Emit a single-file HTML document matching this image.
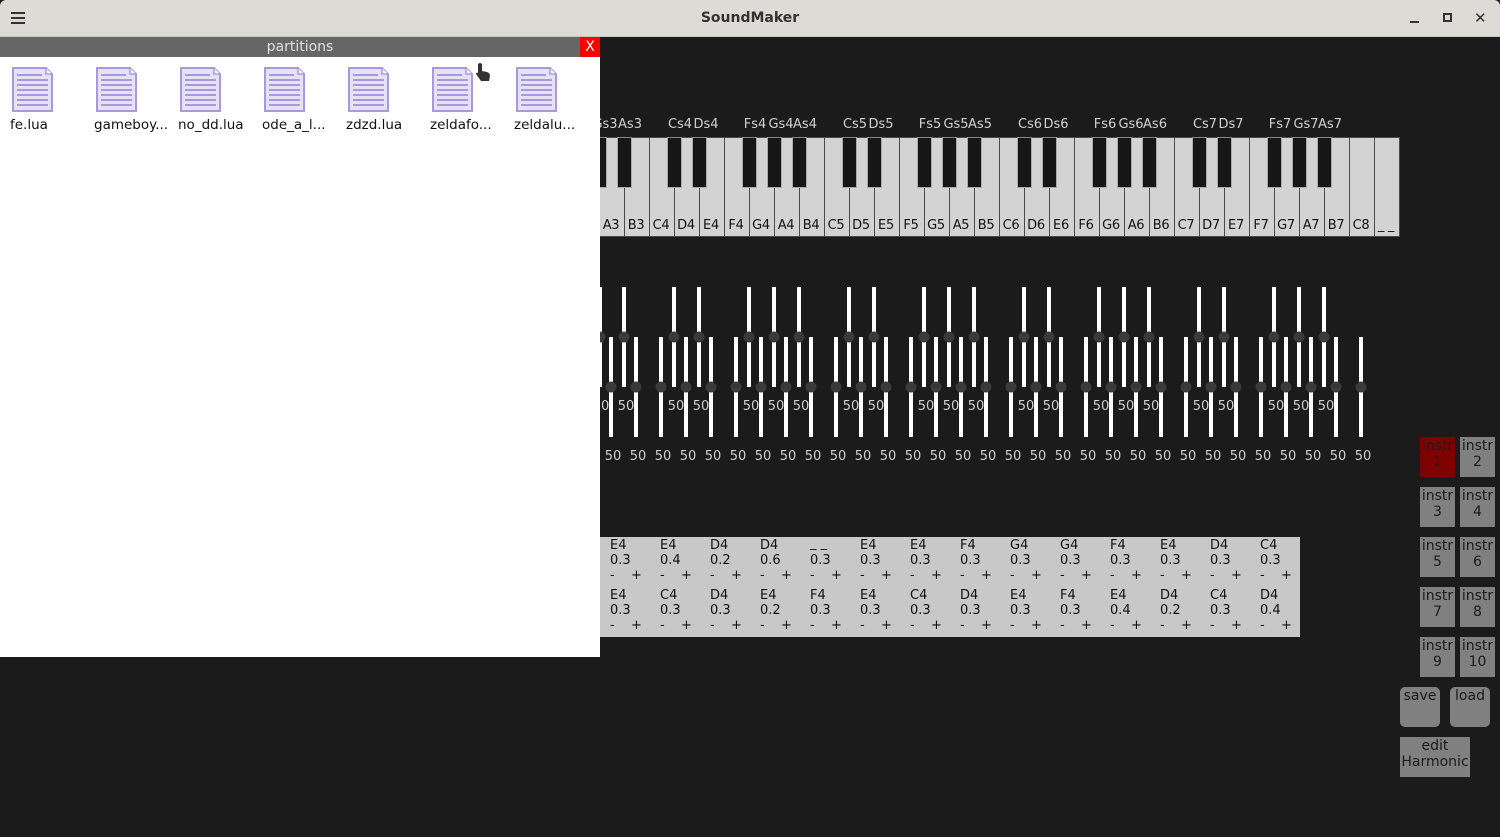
<!DOCTYPE html>
<html><head><meta charset="utf-8"><style>
*{margin:0;padding:0;box-sizing:border-box}
body{width:1500px;height:837px;background:#1b1b1b;position:relative;overflow:hidden;font-family:"DejaVu Sans","Liberation Sans",sans-serif;font-size:13px}
.a{position:absolute}
.tb{left:0;top:0;width:1500px;height:37px;background:#dedbd7;border-bottom:1px solid #c8c4c0;border-radius:6px 6px 0 0}
.w{position:absolute;top:137px;width:26px;height:100px;background:#d3d3d3;border:1px solid #4a4a4a;color:#111;font-size:13px;line-height:14px;padding-top:81px;padding-right:2px;text-align:center;letter-spacing:-0.3px}
.b{position:absolute;top:137px;width:15px;height:51px;background:#161616;border:1px solid #aaa;border-top-color:#888}
.bl{position:absolute;top:117px;color:#d0d0d0;font-size:13px;width:40px;text-align:center;margin-left:-20px}
.seq{left:600px;top:537px;width:700px;height:100px;background:#c8c8c8}
.c{position:absolute;width:50px;height:50px;font-size:13px;line-height:15px;color:#111}
.c i{font-style:normal;position:absolute;left:10px;white-space:pre}
.c .n1{top:1px}.c .n2{top:16px}.c .m{top:31px;left:10px}.c .p{top:31px;left:31px}
.btn{position:absolute;background:#808080;color:#1a1a1a;font-size:14px;line-height:16px;text-align:center;padding-top:1px}
.fl{position:absolute;top:117px;font-size:13.5px;color:#111}
</style></head><body>
<div class="a tb"></div>
<div class="a" style="left:11px;top:12px;width:14px;height:2px;background:#333;box-shadow:0 5px 0 #333,0 10px 0 #333"></div>
<div class="a" style="left:0;width:1500px;top:10px;text-align:center;font-weight:bold;font-size:14px;color:#333;padding-left:0">SoundMaker</div>
<div class="a" style="left:1410px;top:21px;width:9px;height:2px;background:#333"></div>
<div class="a" style="left:1443px;top:13px;width:9px;height:9px;border:2px solid #333"></div>
<div class="a" style="left:1474px;top:9px;font-size:15px;font-weight:bold;color:#333">✕</div>

<div class="bl" style="left:605px">Gs3</div><div class="bl" style="left:630px">As3</div>
<div class="bl" style="left:680px">Cs4</div><div class="bl" style="left:706px">Ds4</div>
<div class="bl" style="left:755px">Fs4</div><div class="bl" style="left:781px">Gs4</div><div class="bl" style="left:805px">As4</div>
<div class="bl" style="left:855px">Cs5</div><div class="bl" style="left:881px">Ds5</div>
<div class="bl" style="left:930px">Fs5</div><div class="bl" style="left:956px">Gs5</div><div class="bl" style="left:980px">As5</div>
<div class="bl" style="left:1030px">Cs6</div><div class="bl" style="left:1056px">Ds6</div>
<div class="bl" style="left:1105px">Fs6</div><div class="bl" style="left:1131px">Gs6</div><div class="bl" style="left:1155px">As6</div>
<div class="bl" style="left:1205px">Cs7</div><div class="bl" style="left:1231px">Ds7</div>
<div class="bl" style="left:1280px">Fs7</div><div class="bl" style="left:1306px">Gs7</div><div class="bl" style="left:1330px">As7</div>

<div class="w" style="left:599px">A3</div><div class="w" style="left:624px">B3</div><div class="w" style="left:649px">C4</div><div class="w" style="left:674px">D4</div><div class="w" style="left:699px">E4</div><div class="w" style="left:724px">F4</div><div class="w" style="left:749px">G4</div><div class="w" style="left:774px">A4</div><div class="w" style="left:799px">B4</div><div class="w" style="left:824px">C5</div><div class="w" style="left:849px">D5</div><div class="w" style="left:874px">E5</div><div class="w" style="left:899px">F5</div><div class="w" style="left:924px">G5</div><div class="w" style="left:949px">A5</div><div class="w" style="left:974px">B5</div><div class="w" style="left:999px">C6</div><div class="w" style="left:1024px">D6</div><div class="w" style="left:1049px">E6</div><div class="w" style="left:1074px">F6</div><div class="w" style="left:1099px">G6</div><div class="w" style="left:1124px">A6</div><div class="w" style="left:1149px">B6</div><div class="w" style="left:1174px">C7</div><div class="w" style="left:1199px">D7</div><div class="w" style="left:1224px">E7</div><div class="w" style="left:1249px">F7</div><div class="w" style="left:1274px">G7</div><div class="w" style="left:1299px">A7</div><div class="w" style="left:1324px">B7</div><div class="w" style="left:1349px">C8</div><div class="w" style="left:1374px">_ _</div>
<div class="b" style="left:592px"></div><div class="b" style="left:617px"></div><div class="b" style="left:667px"></div><div class="b" style="left:692px"></div><div class="b" style="left:742px"></div><div class="b" style="left:767px"></div><div class="b" style="left:792px"></div><div class="b" style="left:842px"></div><div class="b" style="left:867px"></div><div class="b" style="left:917px"></div><div class="b" style="left:942px"></div><div class="b" style="left:967px"></div><div class="b" style="left:1017px"></div><div class="b" style="left:1042px"></div><div class="b" style="left:1092px"></div><div class="b" style="left:1117px"></div><div class="b" style="left:1142px"></div><div class="b" style="left:1192px"></div><div class="b" style="left:1217px"></div><div class="b" style="left:1267px"></div><div class="b" style="left:1292px"></div><div class="b" style="left:1317px"></div>

<svg class="a" style="left:0;top:0" width="1500" height="837">
<g fill="#fff">
<rect x="598" y="287" width="4" height="100"/><rect x="622" y="287" width="4" height="100"/><rect x="672" y="287" width="4" height="100"/><rect x="697" y="287" width="4" height="100"/><rect x="747" y="287" width="4" height="100"/><rect x="772" y="287" width="4" height="100"/><rect x="797" y="287" width="4" height="100"/><rect x="847" y="287" width="4" height="100"/><rect x="872" y="287" width="4" height="100"/><rect x="922" y="287" width="4" height="100"/><rect x="947" y="287" width="4" height="100"/><rect x="972" y="287" width="4" height="100"/><rect x="1022" y="287" width="4" height="100"/><rect x="1047" y="287" width="4" height="100"/><rect x="1097" y="287" width="4" height="100"/><rect x="1122" y="287" width="4" height="100"/><rect x="1147" y="287" width="4" height="100"/><rect x="1197" y="287" width="4" height="100"/><rect x="1222" y="287" width="4" height="100"/><rect x="1272" y="287" width="4" height="100"/><rect x="1297" y="287" width="4" height="100"/><rect x="1322" y="287" width="4" height="100"/>
</g>
<g fill="#3a3a3a">
<circle cx="600" cy="337" r="5.5"/><circle cx="624" cy="337" r="5.5"/><circle cx="674" cy="337" r="5.5"/><circle cx="699" cy="337" r="5.5"/><circle cx="749" cy="337" r="5.5"/><circle cx="774" cy="337" r="5.5"/><circle cx="799" cy="337" r="5.5"/><circle cx="849" cy="337" r="5.5"/><circle cx="874" cy="337" r="5.5"/><circle cx="924" cy="337" r="5.5"/><circle cx="949" cy="337" r="5.5"/><circle cx="974" cy="337" r="5.5"/><circle cx="1024" cy="337" r="5.5"/><circle cx="1049" cy="337" r="5.5"/><circle cx="1099" cy="337" r="5.5"/><circle cx="1124" cy="337" r="5.5"/><circle cx="1149" cy="337" r="5.5"/><circle cx="1199" cy="337" r="5.5"/><circle cx="1224" cy="337" r="5.5"/><circle cx="1274" cy="337" r="5.5"/><circle cx="1299" cy="337" r="5.5"/><circle cx="1324" cy="337" r="5.5"/>
</g>
<g fill="#fff">
<rect x="609" y="337" width="4" height="100"/><rect x="634" y="337" width="4" height="100"/><rect x="659" y="337" width="4" height="100"/><rect x="684" y="337" width="4" height="100"/><rect x="709" y="337" width="4" height="100"/><rect x="734" y="337" width="4" height="100"/><rect x="759" y="337" width="4" height="100"/><rect x="784" y="337" width="4" height="100"/><rect x="809" y="337" width="4" height="100"/><rect x="834" y="337" width="4" height="100"/><rect x="859" y="337" width="4" height="100"/><rect x="884" y="337" width="4" height="100"/><rect x="909" y="337" width="4" height="100"/><rect x="934" y="337" width="4" height="100"/><rect x="959" y="337" width="4" height="100"/><rect x="984" y="337" width="4" height="100"/><rect x="1009" y="337" width="4" height="100"/><rect x="1034" y="337" width="4" height="100"/><rect x="1059" y="337" width="4" height="100"/><rect x="1084" y="337" width="4" height="100"/><rect x="1109" y="337" width="4" height="100"/><rect x="1134" y="337" width="4" height="100"/><rect x="1159" y="337" width="4" height="100"/><rect x="1184" y="337" width="4" height="100"/><rect x="1209" y="337" width="4" height="100"/><rect x="1234" y="337" width="4" height="100"/><rect x="1259" y="337" width="4" height="100"/><rect x="1284" y="337" width="4" height="100"/><rect x="1309" y="337" width="4" height="100"/><rect x="1334" y="337" width="4" height="100"/><rect x="1359" y="337" width="4" height="100"/>
</g>
<g fill="#3a3a3a">
<circle cx="611" cy="387" r="5.5"/><circle cx="636" cy="387" r="5.5"/><circle cx="661" cy="387" r="5.5"/><circle cx="686" cy="387" r="5.5"/><circle cx="711" cy="387" r="5.5"/><circle cx="736" cy="387" r="5.5"/><circle cx="761" cy="387" r="5.5"/><circle cx="786" cy="387" r="5.5"/><circle cx="811" cy="387" r="5.5"/><circle cx="836" cy="387" r="5.5"/><circle cx="861" cy="387" r="5.5"/><circle cx="886" cy="387" r="5.5"/><circle cx="911" cy="387" r="5.5"/><circle cx="936" cy="387" r="5.5"/><circle cx="961" cy="387" r="5.5"/><circle cx="986" cy="387" r="5.5"/><circle cx="1011" cy="387" r="5.5"/><circle cx="1036" cy="387" r="5.5"/><circle cx="1061" cy="387" r="5.5"/><circle cx="1086" cy="387" r="5.5"/><circle cx="1111" cy="387" r="5.5"/><circle cx="1136" cy="387" r="5.5"/><circle cx="1161" cy="387" r="5.5"/><circle cx="1186" cy="387" r="5.5"/><circle cx="1211" cy="387" r="5.5"/><circle cx="1236" cy="387" r="5.5"/><circle cx="1261" cy="387" r="5.5"/><circle cx="1286" cy="387" r="5.5"/><circle cx="1311" cy="387" r="5.5"/><circle cx="1336" cy="387" r="5.5"/><circle cx="1361" cy="387" r="5.5"/>
</g>
<g fill="#cfcfcf" font-size="13" font-family="DejaVu Sans, sans-serif" text-anchor="middle">
<text x="601" y="410">50</text><text x="626" y="410">50</text><text x="676" y="410">50</text><text x="701" y="410">50</text><text x="751" y="410">50</text><text x="776" y="410">50</text><text x="801" y="410">50</text><text x="851" y="410">50</text><text x="876" y="410">50</text><text x="926" y="410">50</text><text x="951" y="410">50</text><text x="976" y="410">50</text><text x="1026" y="410">50</text><text x="1051" y="410">50</text><text x="1101" y="410">50</text><text x="1126" y="410">50</text><text x="1151" y="410">50</text><text x="1201" y="410">50</text><text x="1226" y="410">50</text><text x="1276" y="410">50</text><text x="1301" y="410">50</text><text x="1326" y="410">50</text>
<text x="613" y="460">50</text><text x="638" y="460">50</text><text x="663" y="460">50</text><text x="688" y="460">50</text><text x="713" y="460">50</text><text x="738" y="460">50</text><text x="763" y="460">50</text><text x="788" y="460">50</text><text x="813" y="460">50</text><text x="838" y="460">50</text><text x="863" y="460">50</text><text x="888" y="460">50</text><text x="913" y="460">50</text><text x="938" y="460">50</text><text x="963" y="460">50</text><text x="988" y="460">50</text><text x="1013" y="460">50</text><text x="1038" y="460">50</text><text x="1063" y="460">50</text><text x="1088" y="460">50</text><text x="1113" y="460">50</text><text x="1138" y="460">50</text><text x="1163" y="460">50</text><text x="1188" y="460">50</text><text x="1213" y="460">50</text><text x="1238" y="460">50</text><text x="1263" y="460">50</text><text x="1288" y="460">50</text><text x="1313" y="460">50</text><text x="1338" y="460">50</text><text x="1363" y="460">50</text>
</g>
</svg>

<div class="a seq">
<div class="c" style="left:0;top:0"><i class="n1">E4</i><i class="n2">0.3</i><i class="m">-</i><i class="p">+</i></div>
<div class="c" style="left:50px;top:0"><i class="n1">E4</i><i class="n2">0.4</i><i class="m">-</i><i class="p">+</i></div>
<div class="c" style="left:100px;top:0"><i class="n1">D4</i><i class="n2">0.2</i><i class="m">-</i><i class="p">+</i></div>
<div class="c" style="left:150px;top:0"><i class="n1">D4</i><i class="n2">0.6</i><i class="m">-</i><i class="p">+</i></div>
<div class="c" style="left:200px;top:0"><i class="n1" style="top:-1px">_ _</i><i class="n2">0.3</i><i class="m">-</i><i class="p">+</i></div>
<div class="c" style="left:250px;top:0"><i class="n1">E4</i><i class="n2">0.3</i><i class="m">-</i><i class="p">+</i></div>
<div class="c" style="left:300px;top:0"><i class="n1">E4</i><i class="n2">0.3</i><i class="m">-</i><i class="p">+</i></div>
<div class="c" style="left:350px;top:0"><i class="n1">F4</i><i class="n2">0.3</i><i class="m">-</i><i class="p">+</i></div>
<div class="c" style="left:400px;top:0"><i class="n1">G4</i><i class="n2">0.3</i><i class="m">-</i><i class="p">+</i></div>
<div class="c" style="left:450px;top:0"><i class="n1">G4</i><i class="n2">0.3</i><i class="m">-</i><i class="p">+</i></div>
<div class="c" style="left:500px;top:0"><i class="n1">F4</i><i class="n2">0.3</i><i class="m">-</i><i class="p">+</i></div>
<div class="c" style="left:550px;top:0"><i class="n1">E4</i><i class="n2">0.3</i><i class="m">-</i><i class="p">+</i></div>
<div class="c" style="left:600px;top:0"><i class="n1">D4</i><i class="n2">0.3</i><i class="m">-</i><i class="p">+</i></div>
<div class="c" style="left:650px;top:0"><i class="n1">C4</i><i class="n2">0.3</i><i class="m">-</i><i class="p">+</i></div>
<div class="c" style="left:0;top:50px"><i class="n1">E4</i><i class="n2">0.3</i><i class="m">-</i><i class="p">+</i></div>
<div class="c" style="left:50px;top:50px"><i class="n1">C4</i><i class="n2">0.3</i><i class="m">-</i><i class="p">+</i></div>
<div class="c" style="left:100px;top:50px"><i class="n1">D4</i><i class="n2">0.3</i><i class="m">-</i><i class="p">+</i></div>
<div class="c" style="left:150px;top:50px"><i class="n1">E4</i><i class="n2">0.2</i><i class="m">-</i><i class="p">+</i></div>
<div class="c" style="left:200px;top:50px"><i class="n1">F4</i><i class="n2">0.3</i><i class="m">-</i><i class="p">+</i></div>
<div class="c" style="left:250px;top:50px"><i class="n1">E4</i><i class="n2">0.3</i><i class="m">-</i><i class="p">+</i></div>
<div class="c" style="left:300px;top:50px"><i class="n1">C4</i><i class="n2">0.3</i><i class="m">-</i><i class="p">+</i></div>
<div class="c" style="left:350px;top:50px"><i class="n1">D4</i><i class="n2">0.3</i><i class="m">-</i><i class="p">+</i></div>
<div class="c" style="left:400px;top:50px"><i class="n1">E4</i><i class="n2">0.3</i><i class="m">-</i><i class="p">+</i></div>
<div class="c" style="left:450px;top:50px"><i class="n1">F4</i><i class="n2">0.3</i><i class="m">-</i><i class="p">+</i></div>
<div class="c" style="left:500px;top:50px"><i class="n1">E4</i><i class="n2">0.4</i><i class="m">-</i><i class="p">+</i></div>
<div class="c" style="left:550px;top:50px"><i class="n1">D4</i><i class="n2">0.2</i><i class="m">-</i><i class="p">+</i></div>
<div class="c" style="left:600px;top:50px"><i class="n1">C4</i><i class="n2">0.3</i><i class="m">-</i><i class="p">+</i></div>
<div class="c" style="left:650px;top:50px"><i class="n1">D4</i><i class="n2">0.4</i><i class="m">-</i><i class="p">+</i></div>
</div>

<div class="btn" style="left:1420px;top:437px;width:35px;height:40px;background:#7f0000">instr<br>1</div>
<div class="btn" style="left:1460px;top:437px;width:35px;height:40px">instr<br>2</div>
<div class="btn" style="left:1420px;top:487px;width:35px;height:40px">instr<br>3</div>
<div class="btn" style="left:1460px;top:487px;width:35px;height:40px">instr<br>4</div>
<div class="btn" style="left:1420px;top:537px;width:35px;height:40px">instr<br>5</div>
<div class="btn" style="left:1460px;top:537px;width:35px;height:40px">instr<br>6</div>
<div class="btn" style="left:1420px;top:587px;width:35px;height:40px">instr<br>7</div>
<div class="btn" style="left:1460px;top:587px;width:35px;height:40px">instr<br>8</div>
<div class="btn" style="left:1420px;top:637px;width:35px;height:40px">instr<br>9</div>
<div class="btn" style="left:1460px;top:637px;width:35px;height:40px">instr<br>10</div>
<div class="btn" style="left:1400px;top:687px;width:40px;height:40px;border-radius:5px">save</div>
<div class="btn" style="left:1450px;top:687px;width:40px;height:40px;border-radius:5px">load</div>
<div class="btn" style="left:1400px;top:737px;width:70px;height:40px">edit<br>Harmonic</div>

<div class="a" style="left:0;top:37px;width:600px;height:20px;background:#666;color:#e0e0e0;text-align:center;font-size:14px;line-height:20px">partitions</div>
<div class="a" style="left:580px;top:37px;width:20px;height:20px;background:#f00;color:#fff;text-align:center;font-size:14px;line-height:20px">X</div>
<div class="a" style="left:0;top:57px;width:600px;height:600px;background:#fff"></div>
<svg class="a" style="left:0;top:0" width="600" height="140">
<defs><g id="ic"><path d="M1 1 H34 L40 7 V44 H1 Z" fill="#e6e2f6" stroke="#a898dc" stroke-width="2"/><path d="M34 1 V7 H40" fill="#fff" stroke="#a898dc" stroke-width="1.5"/><g stroke="#a898dc" stroke-width="2"><line x1="5" y1="8" x2="30" y2="8"/><line x1="5" y1="13" x2="36" y2="13"/><line x1="5" y1="18" x2="36" y2="18"/><line x1="5" y1="23" x2="36" y2="23"/><line x1="5" y1="28" x2="36" y2="28"/><line x1="5" y1="33" x2="36" y2="33"/><line x1="5" y1="38" x2="36" y2="38"/></g></g></defs>
<use href="#ic" x="12" y="67"/><use href="#ic" x="96" y="67"/><use href="#ic" x="180" y="67"/><use href="#ic" x="264" y="67"/><use href="#ic" x="348" y="67"/><use href="#ic" x="432" y="67"/><use href="#ic" x="516" y="67"/>
<path d="M478 64 q2-2 4 0 v7 l5 1 q3 1 3 4 l-1 5 h-8 l-5-7 q0-2 2-1 z" fill="#333"/>
</svg>
<div class="fl" style="left:10px">fe.lua</div>
<div class="fl" style="left:94px">gameboy...</div>
<div class="fl" style="left:178px">no_dd.lua</div>
<div class="fl" style="left:262px">ode_a_l...</div>
<div class="fl" style="left:346px">zdzd.lua</div>
<div class="fl" style="left:430px">zeldafo...</div>
<div class="fl" style="left:514px">zeldalu...</div>
</body></html>
